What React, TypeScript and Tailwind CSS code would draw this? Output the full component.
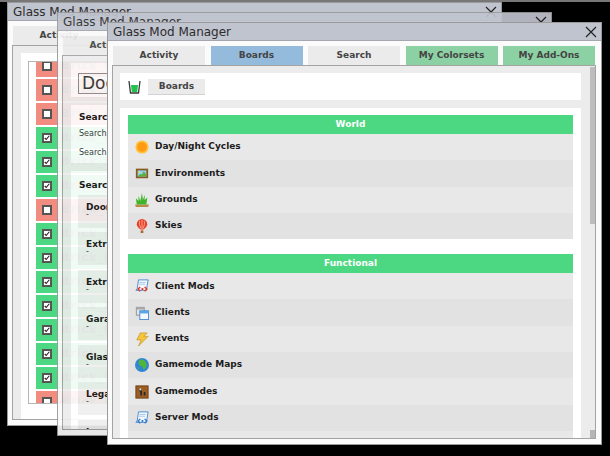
import type { ReactNode } from "react";

const tabs = ["Activity", "Boards", "Search", "My Colorsets", "My Add-Ons"];
const font = "font-['DejaVu_Sans',sans-serif]";

const Sun = () => (
  <svg width="14" height="14" viewBox="0 0 16 16">
    <circle cx="8" cy="8" r="7.500" fill="#ffc23a" />
    <circle cx="8" cy="8" r="5.500" fill="#ff9a14" />
  </svg>
);
const Picture = () => (
  <svg width="14" height="14" viewBox="0 0 16 16">
    <rect x="1" y="3" width="14" height="11" fill="#8a5a24" />
    <rect x="3" y="5" width="10" height="7" fill="#8fd0ee" />
    <path d="M3 12l3-3 2 1 2-4 3 4v2z" fill="#5fae3a" />
    <circle cx="5" cy="7" r="1" fill="#ffe24a" />
  </svg>
);
const Grass = () => (
  <svg width="14" height="14" viewBox="0 0 16 16">
    <path d="M0 13h16l-1 3H1z" fill="#b98a4a" />
    <path d="M2 13l-1-7 3 3 0-6 2 6 2-9 1 8 2-6 0 6 3-3-1 8z" fill="#3fb52a" />
  </svg>
);
const Balloon = () => (
  <svg width="14" height="14" viewBox="0 0 16 16">
    <path d="M8 0a6 6 0 0 1 6 6c0 3-3 5-4.500 6h-3C5 11 2 9 2 6a6 6 0 0 1 6-6z" fill="#e8402a" />
    <path d="M8 1v10M5.500 2c-1 3 0 6 1.500 9M10.500 2c1 3 0 6-1.500 9" stroke="#ffd0b0" strokeWidth=".8" fill="none" />
    <rect x="6.500" y="13" width="3" height="3" fill="#a8682a" />
  </svg>
);
const Script = ({ mark }: { mark: string }) => (
  <svg width="14" height="14" viewBox="0 0 16 16">
    <path d="M4 1h11l-2 12H1l1.500-2z" fill="#f2f7fd" stroke="#3f86d0" />
    <path d="M5 4h7M4.500 6h7" stroke="#9cc0e4" strokeWidth=".9" />
    <path d="M6 9l-2.500 2.500L6 14M11 9l2.500 2.500L11 14" stroke={mark} strokeWidth="1.600" fill="none" />
    <circle cx="8.500" cy="11.500" r="1.300" fill={mark} />
  </svg>
);
const Windows = () => (
  <svg width="14" height="14" viewBox="0 0 16 16">
    <rect x="1.500" y="1.500" width="9" height="9" fill="#e4e4e4" stroke="#8c8c8c" />
    <rect x="1.500" y="1.500" width="9" height="2.500" fill="#a8a8a8" />
    <rect x="5.500" y="5.500" width="10" height="10" fill="#f4f9ff" stroke="#3f86d0" />
    <rect x="5.500" y="5.500" width="10" height="3" fill="#5aa4e6" />
  </svg>
);
const Bolt = () => (
  <svg width="14" height="14" viewBox="0 0 16 16">
    <path d="M6 1h8l-4 4h5L4 16l3-7H2z" fill="#f5c53a" stroke="#c08a20" strokeWidth=".7" />
  </svg>
);
const Globe = () => (
  <svg width="14" height="14" viewBox="0 0 16 16">
    <circle cx="8" cy="8" r="8" fill="#2f86d8" />
    <path d="M5 2c3-1 7 0 8 4 1 3-1 7-3 7-1 0-1-4-3-4S4 7 4 5z" fill="#4fb43a" />
    <path d="M2 10c1 1 3 1 3 3l-1 0z" fill="#4fb43a" />
  </svg>
);
const Crate = () => (
  <svg width="14" height="14" viewBox="0 0 16 16">
    <rect x="1" y="1" width="14" height="14" fill="#9a5d22" />
    <rect x="1" y="1" width="14" height="14" fill="none" stroke="#6e3f14" />
    <path d="M5 4l3 3v5H6V8L4 5zM10 8h2v4h-2z" fill="#2a2a2a" />
    <path d="M5 4h2v2H5z" fill="#e8e8e8" />
  </svg>
);
const Stop = () => (
  <svg width="14" height="14" viewBox="0 0 16 16">
    <circle cx="8" cy="8" r="7" fill="#e03024" />
  </svg>
);

const sections = [
  {
    title: "World",
    rows: [
      ["Day/Night Cycles", <Sun />],
      ["Environments", <Picture />],
      ["Grounds", <Grass />],
      ["Skies", <Balloon />],
    ],
  },
  {
    title: "Functional",
    rows: [
      ["Client Mods", <Script mark="#e0301e" />],
      ["Clients", <Windows />],
      ["Events", <Bolt />],
      ["Gamemode Maps", <Globe />],
      ["Gamemodes", <Crate />],
      ["Server Mods", <Script mark="#2f78c8" />],
      ["Special", <Stop />],
    ],
  },
] as const;

const brickRows: [string, boolean][] = [
  ["Brick_Mod", false],
  ["Brick_Mod", false],
  ["Brick_Mod", false],
  ["Brick_Mod", true],
  ["Brick_Mus", true],
  ["Brick_Pac", true],
  ["Brick_Pol", false],
  ["Brick_Pol", true],
  ["Brick_Pol", true],
  ["Brick_Pol", true],
  ["Brick_Por", true],
  ["Brick_Pri", true],
  ["Brick_Pri", true],
  ["Brick_Pri", true],
  ["Brick_Pri", false],
];

const results = ["Door", "Extr", "Extr", "Gara", "Glas", "Lega", "Lega"];

function GlassWindow({
  className,
  active,
  children,
}: {
  className: string;
  active: string;
  children: ReactNode;
}) {
  return (
    <div className={`absolute flex w-[495px] flex-col border border-[#9a9a9a] bg-[#fbfbfb] ${className}`}>
      <div className="flex h-[18px] shrink-0 items-center justify-between border-b border-[#a5a7ae] bg-[#c0c4cf] pl-[5px] pr-[4px]">
        <span className={`text-[12px] leading-none text-[#2c2c2c] ${font}`}>Glass Mod Manager</span>
        <svg width="12" height="12" viewBox="0 0 12 12">
          <path d="M1 1l10 10M11 1L1 11" stroke="#222" strokeWidth="1.200" />
        </svg>
      </div>
      <div className="ml-[5px] mr-[6px] mt-[5px] flex h-[19px] shrink-0 gap-[5.5px]">
        {tabs.map((tab) => {
          const bg =
            tab === active
              ? "bg-[#94bbdc]"
              : tab.startsWith("My")
                ? "bg-[#8cd1a3]"
                : "bg-[#ebebeb]";
          return (
            <div
              key={tab}
              className={`flex flex-1 items-center justify-center pt-[1px] text-[9px] font-bold text-[#444] ${font} ${bg}`}
            >
              {tab}
            </div>
          );
        })}
      </div>
      <div className="relative mb-[5px] ml-[4px] mr-[5px] min-h-0 flex-1 overflow-hidden border border-[#a3a3a3] bg-[#ececec]">
        {children}
      </div>
    </div>
  );
}

function BoardsContent() {
  return (
    <div className={`flex flex-col gap-[8px] pl-[7px] pr-[14px] pt-[7px] ${font}`}>
      <div className="flex h-[27px] shrink-0 items-center gap-[7px] bg-white pl-[8px] pt-[1px]">
        <svg width="13" height="14" viewBox="0 0 13 14">
          <path d="M1 1l1.500 12h8L12 1" fill="none" stroke="#3a3a3a" strokeWidth="1.300" />
          <path d="M3 5h7l-.8 7H3.800z" fill="#22c24e" />
        </svg>
        <div className="flex h-[16px] w-[57px] items-center justify-center border-b border-[#d2d2d2] bg-[#ebebeb] pt-[1px] text-[9px] font-bold text-[#444]">
          Boards
        </div>
      </div>
      <div className="flex flex-col gap-[15px] bg-white px-[8px] pt-[7px]">
        {sections.map((section) => (
          <div key={section.title}>
            <div className="flex h-[19px] items-center justify-center bg-[#4cd882] text-[9px] font-bold text-white">
              {section.title}
            </div>
            {section.rows.map(([label, icon], i) => (
              <div
                key={label}
                className={`flex h-[26.3px] items-center gap-[6px] pl-[7px] text-[9px] font-bold text-[#1c1c1c] ${
                  i % 2 === 0 ? "bg-[#e8e8e8]" : "bg-[#e2e2e2]"
                }`}
              >
                {icon}
                <span>{label}</span>
              </div>
            ))}
          </div>
        ))}
      </div>
      <div className="absolute bottom-0 right-0 top-0 w-[5px]">
        <div className="mt-[1px] h-[157px] bg-[#bdbdbd]" />
        <div className="absolute bottom-0 h-[8px] w-full bg-[#b5b5b5]" />
      </div>
    </div>
  );
}

function SearchContent() {
  return (
    <div className={`flex flex-col gap-[8px] pl-[8px] pr-[14px] pt-[7px] ${font}`}>
      <div className="bg-white pb-[3px] pl-[7px] pr-[8px] pt-[10px]">
        <div className="flex h-[21px] items-center border border-[#8c8c8c] bg-[#fafafa] pl-[3px] text-[17px] leading-none text-[#333]">
          Door Search
        </div>
      </div>
      <div className="flex h-[58px] flex-col bg-white pl-[8px] pt-[6px] text-[8px] text-[#333]">
        <span className="text-[9px] font-bold text-[#111]">Search Boards</span>
        <span className="mt-[3px]">Search Titles</span>
        <span className="mt-[7px]">Search Descriptions</span>
      </div>
      <div className="flex flex-col bg-white pl-[8px] pt-[8px]">
        <span className="text-[9px] font-bold text-[#111]">Search Results</span>
        <div className="-ml-[1px] mt-[2px] flex flex-col gap-[4.500px]">
          {results.map((result, i) => (
            <div key={i} className="flex h-[33px] flex-col bg-[#efefef] pl-[8px] pt-[6px]">
              <span className="text-[9px] font-bold leading-[12px] text-[#111]">{result}</span>
              <span className="-mt-[3px] text-[8px] leading-[10px] text-[#333]">-</span>
            </div>
          ))}
        </div>
      </div>
    </div>
  );
}

function ModsContent() {
  return (
    <div className="flex h-full flex-col bg-[#ececec] pl-[8px] pr-[14px] pt-[7px]">
      <div className="flex h-full flex-col bg-white px-[7px] pb-[15px] pt-[8px]">
        <div className="flex h-full flex-col overflow-hidden border border-[#b5b5b5] pl-[7px]">
          <div className="-mt-[7px] flex flex-col gap-[2px]">
            {brickRows.map(([name, on], i) => (
              <div
                key={i}
                className={`flex h-[22px] shrink-0 items-center gap-[9px] pl-[6px] ${on ? "bg-[#4cd882]" : "bg-[#f28b80]"}`}
              >
                <span className="flex h-[10px] w-[10px] items-center justify-center border-2 border-[#555] bg-white">
                  {on && (
                    <svg width="8" height="8" viewBox="0 0 8 8">
                      <path d="M1 4l2 2 4-5" fill="none" stroke="#222" strokeWidth="1.500" />
                    </svg>
                  )}
                </span>
                <span className={`text-[11px] font-bold tracking-[1px] text-[#666] ${font}`}>{name}</span>
              </div>
            ))}
          </div>
        </div>
      </div>
    </div>
  );
}

export default function App() {
  return (
    <div className="relative h-[456px] w-[610px] overflow-hidden bg-black">
      <div className="h-[2px] bg-[#777]" />
      <GlassWindow className="left-[7px] top-[2px] h-[424px]" active="My Add-Ons">
        <ModsContent />
      </GlassWindow>
      <GlassWindow className="left-[57px] top-[12px] h-[424px] opacity-[0.92]" active="Search">
        <SearchContent />
      </GlassWindow>
      <GlassWindow className="left-[107px] top-[22px] h-[423px]" active="Boards">
        <BoardsContent />
      </GlassWindow>
    </div>
  );
}
